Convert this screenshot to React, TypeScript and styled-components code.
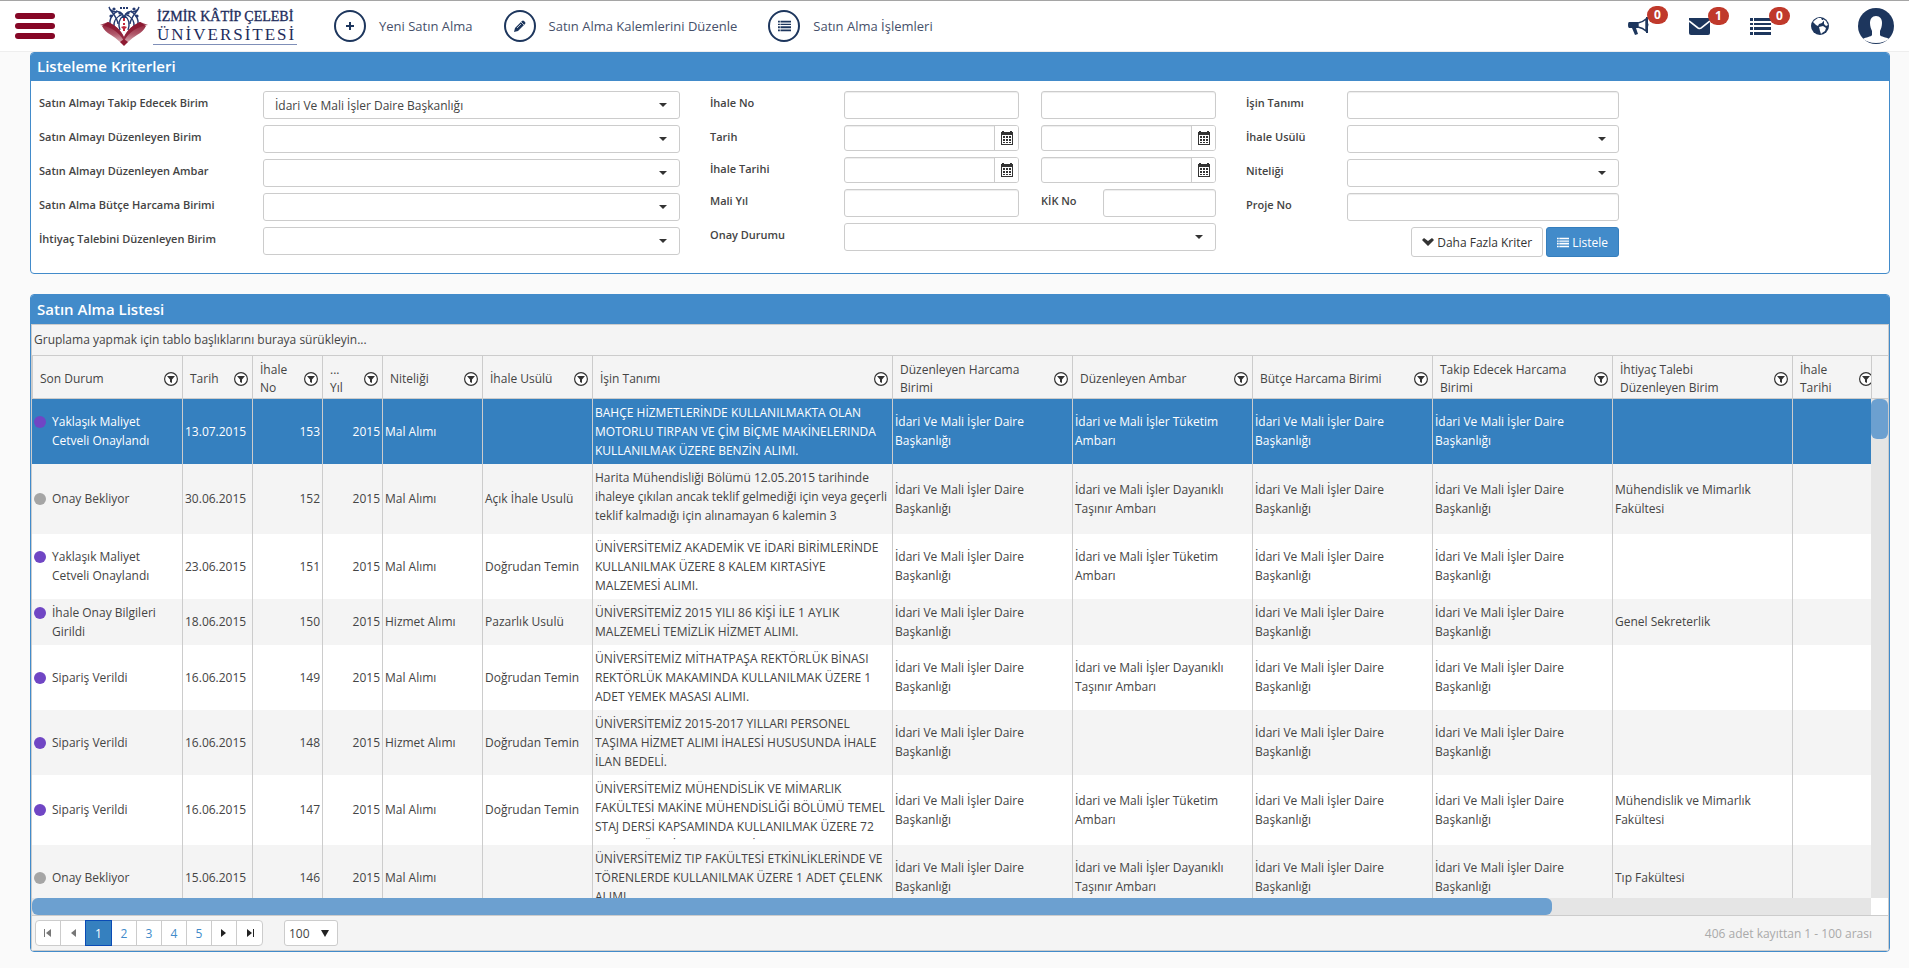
import React from "react";
import styled, { createGlobalStyle, css } from "styled-components";

const GlobalStyle = createGlobalStyle`
  *, *::before, *::after { box-sizing: border-box; }
  body {
    margin: 0;
    background: #fafafa;
    color: #444;
    font-family: "Open Sans", "Noto Sans", sans-serif;
    font-size: 12px;
  }
  button, input, select { font: inherit; color: inherit; margin: 0; }
  svg { display: block; }
`;

const NAVY = "#1d365d";
const BLUE = "#428bca";
const LINE = "#ccc";

/* ---------- top bar ---------- */

const TopBar = styled.header`
  display: flex;
  align-items: center;
  height: 52px;
  padding: 0 15px;
  background: #fff;
  border-top: 1px solid #a5a5a5;
  border-bottom: 1px solid #eee;
`;

const MenuButton = styled.button`
  display: flex;
  flex-direction: column;
  gap: 4px;
  width: 40px;
  padding: 0;
  border: 0;
  background: none;
`;

const MenuBar = styled.span`
  height: 6px;
  border-radius: 3px;
  background: #850626;
`;

const Brand = styled.a`
  display: flex;
  align-items: center;
  gap: 5px;
  width: 197px;
  margin-left: 45px;
  color: #1d2c5c;
  text-decoration: none;
`;

const BrandText = styled.span`
  display: flex;
  flex-direction: column;
  width: 144px;
  padding-left: 4px;
  border-bottom: 1px solid #7f8fb8;
  font-family: "Liberation Serif", serif;
  line-height: 18px;
  white-space: nowrap;
`;

const BrandTop = styled.span`
  font-size: 14px;
  -webkit-text-stroke: 0.3px #1d2c5c;
`;

const BrandBottom = styled.span`
  font-size: 17px;
  letter-spacing: 2px;
`;

const Nav = styled.nav`
  display: flex;
  gap: 31px;
  margin-left: 37px;
`;

const NavLink = styled.a`
  display: flex;
  align-items: center;
  gap: 13px;
  color: #46506a;
  font-size: 13px;
  text-decoration: none;
  white-space: nowrap;
`;

const Ring = styled.span`
  display: grid;
  place-items: center;
  width: 32px;
  height: 32px;
  border: 2px solid ${NAVY};
  border-radius: 50%;
  color: ${NAVY};
`;

const Tools = styled.div`
  display: flex;
  align-items: center;
  margin-left: auto;
  gap: 29px;
`;

const Notices = styled.div`
  display: flex;
  align-items: center;
  gap: 40px;
`;

const ToolButton = styled.button`
  position: relative;
  display: block;
  padding: 0;
  border: 0;
  background: none;
  color: ${NAVY};
`;

const Badge = styled.span`
  position: absolute;
  left: 19px;
  top: -11px;
  width: 21px;
  height: 18px;
  border-radius: 9px;
  background: #c0392b;
  color: #fff;
  font-size: 12px;
  font-weight: 700;
  line-height: 18px;
  text-align: center;
`;

/* ---------- panels ---------- */

const Main = styled.main`
  display: flex;
  flex-direction: column;
  gap: 20px;
  padding: 0 19px 16px 30px;
`;

const Panel = styled.section`
  border: 1px solid ${BLUE};
  border-radius: 4px;
  background: #fff;
  overflow: hidden;
`;

const PanelTitle = styled.h2<{ $tall?: boolean }>`
  height: ${(p) => (p.$tall ? 29 : 28)}px;
  margin: 0;
  padding-left: 6px;
  background: ${BLUE};
  color: #fff;
  font-size: 15px;
  font-weight: 600;
  line-height: ${(p) => (p.$tall ? 28 : 26)}px;
`;

const Criteria = styled.form`
  display: grid;
  grid-template-columns: 641fr 506fr 373fr 240fr;
  column-gap: 30px;
  padding: 10px 0 16px 8px;
`;

const Column = styled.div`
  display: flex;
  flex-direction: column;
  gap: 6px;
  min-width: 0;
`;

const Row = styled.div<{ $cols: string; $gap?: number }>`
  display: grid;
  grid-template-columns: ${(p) => p.$cols};
  column-gap: ${(p) => p.$gap ?? 0}px;
  align-items: start;
`;

const Label = styled.label`
  color: #444;
  font-size: 11px;
  font-weight: 600;
  line-height: 24px;
  white-space: nowrap;
`;

const field = css`
  width: 100%;
  min-width: 0;
  border: 1px solid ${LINE};
  border-radius: 3px;
  background: #fff;
  outline: 0;
`;

const TextBox = styled.input`
  ${field}
  height: 28px;
  padding: 0 11px;
  box-shadow: inset 0 1px 1px rgba(0, 0, 0, 0.075);
`;

const SelectWrap = styled.div`
  display: grid;
  align-items: center;
  & > * { grid-area: 1 / 1; }
  & > svg { justify-self: end; margin-right: 13px; pointer-events: none; }
`;

const SelectBox = styled.select`
  ${field}
  height: 28px;
  padding: 0 11px;
  appearance: none;
  font-size: 12px;
`;

const DateWrap = styled.div`
  ${field}
  display: flex;
  height: 26px;
  overflow: hidden;
`;

const DateInput = styled.input`
  flex: 1;
  min-width: 0;
  border: 0;
  background: none;
  outline: 0;
  box-shadow: inset 0 1px 1px rgba(0, 0, 0, 0.075);
`;

const DateButton = styled.button`
  display: grid;
  place-items: center;
  width: 24px;
  padding: 0;
  border: 0;
  border-left: 1px solid ${LINE};
  background: #fff;
  color: #333;
`;

const Actions = styled.div`
  display: flex;
  justify-content: flex-end;
  gap: 3px;
`;

const ActionButton = styled.button<{ $primary?: boolean }>`
  display: flex;
  align-items: center;
  gap: 3px;
  height: 30px;
  padding: 0 10px;
  border: 1px solid ${(p) => (p.$primary ? "#357ebd" : LINE)};
  border-radius: 3px;
  background: ${(p) => (p.$primary ? BLUE : "#fff")};
  color: ${(p) => (p.$primary ? "#fff" : "#333")};
  font-size: 12px;
  white-space: nowrap;
`;

/* ---------- grid ---------- */

const GridFrame = styled.div`
  border: 1px solid ${LINE};
  background: #f4f4f4;
`;

const GroupHint = styled.div`
  height: 31px;
  padding-left: 2px;
  border-bottom: 1px solid ${LINE};
  line-height: 30px;
  font-size: 12px;
`;

const Viewport = styled.div`
  display: grid;
  grid-template-columns: minmax(0, 1fr) 17px;
  height: calc(100vh - 426px);
  min-height: 240px;
`;

const TableClip = styled.div`
  overflow: hidden;
`;

const Table = styled.table`
  width: 1845px;
  table-layout: fixed;
  border-collapse: separate;
  border-spacing: 0;
  line-height: 19px;
`;

const Th = styled.th`
  height: 43px;
  padding: 4px 4px 0 7px;
  border-left: 1px solid ${LINE};
  border-bottom: 1px solid ${LINE};
  font-weight: 400;
  line-height: 18px;
  text-align: left;
`;

const ThInner = styled.div`
  display: flex;
  align-items: center;
  justify-content: space-between;
  gap: 14px;
`;

const FilterButton = styled.button`
  flex: none;
  padding: 0;
  border: 0;
  background: none;
  color: #333;
`;

const Tr = styled.tr<{ $selected?: boolean }>`
  background: #fff;
  &:nth-child(even) { background: #f4f4f4; }
  ${(p) => p.$selected && css`
    background: #3580bf;
    color: #fff;
  `}
`;

const Td = styled.td<{ $right?: boolean; $full?: boolean }>`
  padding: ${(p) => (p.$full ? "4px 2px" : "3px 2px 4px")};
  border-left: 1px solid ${LINE};
  text-align: ${(p) => (p.$right ? "right" : "left")};
  vertical-align: middle;
  &:first-child { border-left: 0; }
`;

const Status = styled.div`
  display: grid;
  grid-template-columns: 12px 1fr;
  column-gap: 6px;
  padding-right: 8px;
`;

const Dot = styled.span<{ $color: string }>`
  width: 12px;
  height: 12px;
  margin-top: 4px;
  border-radius: 50%;
  background: ${(p) => p.$color};
`;

const Description = styled.div`
  max-height: 62px;
  overflow: hidden;
  white-space: pre;
`;

const Rail = styled.div`
  display: grid;
  grid-template-rows: 43px minmax(0, 1fr);
`;

const RailHead = styled.div`
  border-left: 1px solid ${LINE};
  border-bottom: 1px solid ${LINE};
`;

const Track = styled.div`
  background: #e5e5e5;
`;

const VThumb = styled.div`
  height: 40px;
  border-radius: 6px;
  background: #6ca0d0;
`;

const HScroll = styled.div`
  display: grid;
  grid-template-columns: minmax(0, 1fr) 17px;
  height: 17px;
  background: #fff;
`;

const HThumb = styled.div`
  width: 82.65%;
  height: 17px;
  border-radius: 6px;
  background: #6ca0d0;
`;

const Pager = styled.div`
  display: flex;
  align-items: center;
  height: 35px;
  padding: 0 16px 0 3px;
  border-top: 1px solid ${LINE};
`;

const PageList = styled.div`
  display: flex;
  border: 1px solid ${LINE};
  border-radius: 4px;
  background: #fff;
`;

const PageButton = styled.button<{ $current?: boolean; $muted?: boolean }>`
  display: grid;
  place-items: center;
  width: 25px;
  height: 24px;
  padding: 0;
  border: 0;
  border-right: 1px solid ${LINE};
  background: none;
  color: ${(p) => (p.$muted ? "#777" : "#222")};
  font-size: 12px;
  &:last-child { border-right: 0; }
  ${(p) => p.$current && css`
    width: 27px;
    height: 26px;
    margin: -1px 0 -1px -1px;
    border: 1px solid #0a4bb5;
    background: #3580bf;
  `}
`;

const PageNumber = styled.span<{ $current?: boolean }>`
  color: ${(p) => (p.$current ? "#fff" : BLUE)};
`;

const SizeWrap = styled(SelectWrap)`
  width: 54px;
  margin-left: 21px;
  & > svg { margin-right: 9px; }
`;

const SizeSelect = styled(SelectBox)`
  height: 26px;
  padding: 0 4px;
`;

const PagerInfo = styled.span`
  margin-left: auto;
  color: #aaa;
  font-size: 12px;
`;

/* ---------- drawings ---------- */

const Emblem = () => (
  <svg width="48" height="40" viewBox="0 0 48 40" fill="none" aria-hidden="true">
    <defs>
      <linearGradient id="page" x1="0" y1="16" x2="0" y2="40" gradientUnits="userSpaceOnUse">
        <stop offset="0" stopColor="#8a1730" />
        <stop offset="0.5" stopColor="#b0586a" />
        <stop offset="1" stopColor="#ecd3d6" />
      </linearGradient>
    </defs>
    <g stroke="#243a70" strokeWidth="1.400">
      <path d="M9 1c1 4 4 5 8 5M9 1c1 5 8 8 9 17M39 1c-1 4-4 5-8 5M39 1c-1 5-8 8-9 17" />
      <path d="M16 5c5 1 8 4 8 8M32 5c-5 1-8 4-8 8M10 19c-1-6 2-10 6-13M38 19c1-6-2-10-6-13M14 22c-1-7 3-12 9-14M34 22c1-7-3-12-9-14M20 24c-2-6-1-11 3-14M28 24c2-6 1-11-3-14" />
    </g>
    <g fill="#243a70">
      <circle cx="14" cy="3" r="1.600" /><circle cx="34" cy="3" r="1.600" />
      <circle cx="20" cy="7" r="1.600" /><circle cx="28" cy="7" r="1.600" />
      <circle cx="11" cy="10" r="1.600" /><circle cx="37" cy="10" r="1.600" />
      <path d="M20 1h2v2h-2zM23 1h2v2h-2zM26 1h2v2h-2z" />
    </g>
    <path d="M2 20l6-4c7 3 13 8 16 15 3-7 9-12 16-15l6 4q-3 6-9 9-5 3-9 7l-4 3-4-3q-4-4-9-7-6-3-9-9z" fill="url(#page)" />
    <path d="M0 19l8-3c7 3 13 8 16 15 3-7 9-12 16-15l8 3c-10 1-19 7-24 16C19 26 10 20 0 19z" fill="#8a1730" opacity="0.8" />
    <path d="M20 36l4 4 4-4-4-3z" fill="#8e1b32" />
    <path d="M23 12h2v3h-2zM23 17h2v2h-2zM21 21l3-1 3 1-2 2v2h-2v-2z" fill="#c0283c" />
  </svg>
);

const ListGlyph = ({ w, h }: { w: number; h: number }) => (
  <svg width={w} height={h} viewBox="0 0 21 17" fill="currentColor" aria-hidden="true">
    <path d="M0 0h3v3H0zM4 0h17v3H4zM0 5h3v2H0zM4 5h17v2H4zM0 9h3v3H0zM4 9h17v3H4zM0 14h3v3H0zM4 14h17v3H4z" />
  </svg>
);

const PlusGlyph = () => (
  <svg width="8" height="8" viewBox="0 0 8 8" fill="currentColor" aria-hidden="true">
    <path d="M3 0h2v3h3v2H5v3H3V5H0V3h3z" />
  </svg>
);

const PencilGlyph = () => (
  <svg width="12" height="12" viewBox="0 0 12 12" aria-hidden="true">
    <path d="M0 12l1-4 7-7q1-1 2 0l1 1q1 1 0 2l-7 7z" fill="currentColor" />
    <path d="M7 2l3 3M3 8l4-4" stroke="#fff" strokeWidth="0.700" />
  </svg>
);

const HornGlyph = () => (
  <svg width="21" height="18" viewBox="0 0 21 18" aria-hidden="true">
    <path d="M1 5h9v6H8l2 6-3 1-3-7H1q-1 0-1-3t1-3z" fill="currentColor" />
    <path d="M10 6q5-1 8-4v12q-3-3-8-4z" fill="#fff" stroke="currentColor" strokeWidth="1.4" />
    <path d="M18 0h2v6q1 1 0 4v6h-2z" fill="currentColor" />
  </svg>
);

const MailGlyph = () => (
  <svg width="21" height="17" viewBox="0 0 21 17" aria-hidden="true">
    <path d="M0 0h21v15q0 2-2 2H2q-2 0-2-2z" fill="currentColor" />
    <path d="M0 3l9 7q2 1 3 0l9-7" fill="none" stroke="#fff" strokeWidth="1.6" />
  </svg>
);

const GlobeGlyph = () => (
  <svg width="18" height="18" viewBox="0 0 18 18" aria-hidden="true">
    <circle cx="9" cy="9" r="9" fill="currentColor" />
    <path d="M4 3l3-2 3 0 1 2 2 0-2 3-3 1-1 2-2-1-2-2-1-1zM12 2l3 2 2 4-2 1-2-2 0-2zM8 10l4-1 3 2-1 3-3 2-1 1-1-3z" fill="#fff" />
  </svg>
);

const Avatar = () => (
  <svg width="36" height="36" viewBox="0 0 36 36" aria-hidden="true">
    <circle cx="18" cy="18" r="18" fill={NAVY} />
    <path d="M18 8c4 0 6 3 6 7 0 3-1 6-2 8v4c1 2 6 2 9 4-3 2-7 4-13 4s-10-2-13-4c3-2 8-2 9-4v-4c-1-2-2-5-2-8 0-4 2-7 6-7z" fill="#fff" />
  </svg>
);

const Caret = () => (
  <svg width="8" height="4" viewBox="0 0 8 4" aria-hidden="true">
    <path d="M0 0h8L4 4z" fill="#333" />
  </svg>
);

const SizeCaret = () => (
  <svg width="8" height="7" viewBox="0 0 8 7" aria-hidden="true">
    <path d="M0 0h8L4 7z" fill="#222" />
  </svg>
);

const CalendarGlyph = () => (
  <svg width="12" height="14" viewBox="0 0 12 14" fill="currentColor" aria-hidden="true">
    <path fillRule="evenodd" d="M0 1h1V0h2v1h6V0h2v1h1v13H0zM1 4v9h10V4z" />
    <path d="M2 5h2v2H2zM5 5h2v2H5zM8 5h2v2H8zM2 8h2v2H2zM5 8h2v2H5zM8 8h2v2H8zM2 11h2v1H2zM5 11h2v1H5zM8 11h2v1H8z" />
  </svg>
);

const ChevronGlyph = () => (
  <svg width="12" height="8" viewBox="0 0 12 8" aria-hidden="true">
    <path d="M0 2l2-2 4 3 4-3 2 2-6 6z" fill="currentColor" />
  </svg>
);

const FilterGlyph = () => (
  <svg width="14" height="14" viewBox="0 0 14 14" aria-hidden="true">
    <circle cx="7" cy="7" r="6.400" fill="#fff" stroke="currentColor" strokeWidth="1.200" />
    <path d="M3 4h8L8 7.500V11L6 10V7.500z" fill="currentColor" />
  </svg>
);

const Arrow = ({ back, end }: { back?: boolean; end?: boolean }) => (
  <svg width="8" height="8" viewBox="0 0 8 8" fill="currentColor" aria-hidden="true">
    {back ? <path d="M7 0v8L2 4z" /> : <path d="M1 0v8l5-4z" />}
    {end && (back ? <path d="M0 0h1v8H0z" /> : <path d="M7 0h1v8H7z" />)}
  </svg>
);

/* ---------- data ---------- */

const unit = "İdari Ve Mali İşler Daire Başkanlığı";
const storeA = "İdari ve Mali İşler Tüketim Ambarı";
const storeB = "İdari ve Mali İşler Dayanıklı Taşınır Ambarı";
const PURPLE = "#7046c4";
const GREY = "#a5a5a5";

const columns: [string, number][] = [
  ["Son Durum", 150],
  ["Tarih", 70],
  ["İhale No", 70],
  ["... Yıl", 60],
  ["Niteliği", 100],
  ["İhale Usülü", 110],
  ["İşin Tanımı", 300],
  ["Düzenleyen Harcama Birimi", 180],
  ["Düzenleyen Ambar", 180],
  ["Bütçe Harcama Birimi", 180],
  ["Takip Edecek Harcama Birimi", 180],
  ["İhtiyaç Talebi Düzenleyen Birim", 180],
  ["İhale Tarihi", 85],
];

type Item = {
  status: string;
  color: string;
  date: string;
  no: number;
  kind: string;
  method?: string;
  text: string;
  store?: string;
  requester?: string;
};

const items: Item[] = [
  { status: "Yaklaşık Maliyet Cetveli Onaylandı", color: PURPLE, date: "13.07.2015", no: 153, kind: "Mal Alımı", text: "BAHÇE HİZMETLERİNDE KULLANILMAKTA OLAN\nMOTORLU TIRPAN VE ÇİM BİÇME MAKİNELERINDA\nKULLANILMAK ÜZERE BENZİN ALIMI.", store: storeA },
  { status: "Onay Bekliyor", color: GREY, date: "30.06.2015", no: 152, kind: "Mal Alımı", method: "Açık İhale Usulü", text: "Harita Mühendisliği Bölümü 12.05.2015 tarihinde\nihaleye çıkılan ancak teklif gelmediği için veya geçerli\nteklif kalmadığı için alınamayan 6 kalemin 3\n ", store: storeB, requester: "Mühendislik ve Mimarlık Fakültesi" },
  { status: "Yaklaşık Maliyet Cetveli Onaylandı", color: PURPLE, date: "23.06.2015", no: 151, kind: "Mal Alımı", method: "Doğrudan Temin", text: "ÜNİVERSİTEMİZ AKADEMİK VE İDARİ BİRİMLERİNDE\nKULLANILMAK ÜZERE 8 KALEM KIRTASİYE\nMALZEMESİ ALIMI.", store: storeA },
  { status: "İhale Onay Bilgileri Girildi", color: PURPLE, date: "18.06.2015", no: 150, kind: "Hizmet Alımı", method: "Pazarlık Usulü", text: "ÜNİVERSİTEMİZ 2015 YILI 86 KİŞİ İLE 1 AYLIK\nMALZEMELİ TEMİZLİK HİZMET ALIMI.", requester: "Genel Sekreterlik" },
  { status: "Sipariş Verildi", color: PURPLE, date: "16.06.2015", no: 149, kind: "Mal Alımı", method: "Doğrudan Temin", text: "ÜNİVERSİTEMİZ MİTHATPAŞA REKTÖRLÜK BİNASI\nREKTÖRLÜK MAKAMINDA KULLANILMAK ÜZERE 1\nADET YEMEK MASASI ALIMI.", store: storeB },
  { status: "Sipariş Verildi", color: PURPLE, date: "16.06.2015", no: 148, kind: "Hizmet Alımı", method: "Doğrudan Temin", text: "ÜNİVERSİTEMİZ 2015-2017 YILLARI PERSONEL\nTAŞIMA HİZMET ALIMI İHALESİ HUSUSUNDA İHALE\nİLAN BEDELİ." },
  { status: "Sipariş Verildi", color: PURPLE, date: "16.06.2015", no: 147, kind: "Mal Alımı", method: "Doğrudan Temin", text: "ÜNİVERSİTEMİZ MÜHENDİSLİK VE MİMARLIK\nFAKÜLTESİ MAKİNE MÜHENDİSLİĞİ BÖLÜMÜ TEMEL\nSTAJ DERSİ KAPSAMINDA KULLANILMAK ÜZERE 72\nKALEM TÜKETİM MALZEMESİ ALIMI.", store: storeA, requester: "Mühendislik ve Mimarlık Fakültesi" },
  { status: "Onay Bekliyor", color: GREY, date: "15.06.2015", no: 146, kind: "Mal Alımı", text: "ÜNİVERSİTEMİZ TIP FAKÜLTESİ ETKİNLİKLERİNDE VE\nTÖRENLERDE KULLANILMAK ÜZERE 1 ADET ÇELENK\nALIMI.", store: storeB, requester: "Tıp Fakültesi" },
];

/* ---------- composed controls ---------- */

const Select = ({ id, value = "" }: { id: string; value?: string }) => (
  <SelectWrap>
    <SelectBox id={id} defaultValue={value}>
      <option value={value}>{value}</option>
    </SelectBox>
    <Caret />
  </SelectWrap>
);

const DateBox = ({ id, name }: { id: string; name: string }) => (
  <DateWrap>
    <DateInput id={id} type="text" aria-label={name} />
    <DateButton type="button" aria-label={name + " seç"}>
      <CalendarGlyph />
    </DateButton>
  </DateWrap>
);

const LEFT = "224px minmax(0, 1fr)";
const RIGHT = "101px minmax(0, 1fr)";
const PAIR = "112px minmax(0, 1fr) minmax(0, 1fr)";

const leftFields = [
  ["takip", "Satın Almayı Takip Edecek Birim", unit],
  ["birim", "Satın Almayı Düzenleyen Birim", ""],
  ["ambar", "Satın Almayı Düzenleyen Ambar", ""],
  ["butce", "Satın Alma Bütçe Harcama Birimi", ""],
  ["ihtiyac", "İhtiyaç Talebini Düzenleyen Birim", ""],
];

export default function App() {
  return (
    <>
      <GlobalStyle />
      <TopBar>
        <MenuButton type="button" aria-label="Menü">
          <MenuBar />
          <MenuBar />
          <MenuBar />
        </MenuButton>
        <Brand href="#">
          <Emblem />
          <BrandText>
            <BrandTop>İZMİR KÂTİP ÇELEBİ</BrandTop>
            <BrandBottom>ÜNİVERSİTESİ</BrandBottom>
          </BrandText>
        </Brand>
        <Nav>
          <NavLink href="#"><Ring><PlusGlyph /></Ring>Yeni Satın Alma</NavLink>
          <NavLink href="#"><Ring><PencilGlyph /></Ring>Satın Alma Kalemlerini Düzenle</NavLink>
          <NavLink href="#"><Ring><ListGlyph w={13} h={12} /></Ring>Satın Alma İşlemleri</NavLink>
        </Nav>
        <Tools>
          <Notices>
            <ToolButton type="button" aria-label="Duyurular"><HornGlyph /><Badge>0</Badge></ToolButton>
            <ToolButton type="button" aria-label="Mesajlar"><MailGlyph /><Badge>1</Badge></ToolButton>
            <ToolButton type="button" aria-label="Görevler"><ListGlyph w={21} h={17} /><Badge>0</Badge></ToolButton>
            <ToolButton type="button" aria-label="Dil"><GlobeGlyph /></ToolButton>
          </Notices>
          <ToolButton type="button" aria-label="Profil"><Avatar /></ToolButton>
        </Tools>
      </TopBar>

      <Main>
        <Panel>
          <PanelTitle>Listeleme Kriterleri</PanelTitle>
          <Criteria>
            <Column>
              {leftFields.map(([id, label, value]) => (
                <Row key={id} $cols={LEFT}>
                  <Label htmlFor={id}>{label}</Label>
                  <Select id={id} value={value} />
                </Row>
              ))}
            </Column>
            <Column>
              <Row $cols={PAIR} $gap={22}>
                <Label htmlFor="ihale-no">İhale No</Label>
                <TextBox id="ihale-no" />
                <TextBox aria-label="İhale No bitiş" />
              </Row>
              <Row $cols={PAIR} $gap={22}>
                <Label htmlFor="tarih">Tarih</Label>
                <DateBox id="tarih" name="Tarih" />
                <DateBox id="tarih-2" name="Tarih bitiş" />
              </Row>
              <Row $cols={PAIR} $gap={22}>
                <Label htmlFor="ihale-tarihi">İhale Tarihi</Label>
                <DateBox id="ihale-tarihi" name="İhale Tarihi" />
                <DateBox id="ihale-tarihi-2" name="İhale Tarihi bitiş" />
              </Row>
              <Row $cols={PAIR} $gap={22}>
                <Label htmlFor="mali-yil">Mali Yıl</Label>
                <TextBox id="mali-yil" />
                <Row $cols="62px minmax(0, 1fr)">
                  <Label htmlFor="kik-no">KİK No</Label>
                  <TextBox id="kik-no" />
                </Row>
              </Row>
              <Row $cols="134px minmax(0, 1fr)">
                <Label htmlFor="onay">Onay Durumu</Label>
                <Select id="onay" />
              </Row>
            </Column>
            <Column>
              <Row $cols={RIGHT}>
                <Label htmlFor="tanim">İşin Tanımı</Label>
                <TextBox id="tanim" />
              </Row>
              <Row $cols={RIGHT}>
                <Label htmlFor="usul">İhale Usülü</Label>
                <Select id="usul" />
              </Row>
              <Row $cols={RIGHT}>
                <Label htmlFor="nitelik">Niteliği</Label>
                <Select id="nitelik" />
              </Row>
              <Row $cols={RIGHT}>
                <Label htmlFor="proje">Proje No</Label>
                <TextBox id="proje" />
              </Row>
              <Actions>
                <ActionButton type="button"><ChevronGlyph />Daha Fazla Kriter</ActionButton>
                <ActionButton type="button" $primary><ListGlyph w={12} h={11} />Listele</ActionButton>
              </Actions>
            </Column>
          </Criteria>
        </Panel>

        <Panel>
          <PanelTitle $tall>Satın Alma Listesi</PanelTitle>
          <GridFrame>
            <GroupHint>Gruplama yapmak için tablo başlıklarını buraya sürükleyin...</GroupHint>
            <Viewport>
              <TableClip>
                <Table>
                  <colgroup>
                    {columns.map(([name, w]) => <col key={name} style={{ width: w }} />)}
                  </colgroup>
                  <thead>
                    <tr>
                      {columns.map(([name]) => (
                        <Th key={name} scope="col">
                          <ThInner>
                            {name}
                            <FilterButton type="button" aria-label={name + " filtrele"}><FilterGlyph /></FilterButton>
                          </ThInner>
                        </Th>
                      ))}
                    </tr>
                  </thead>
                  <tbody>
                    {items.map((it, i) => (
                      <Tr key={it.no} $selected={i === 0}>
                        <Td><Status><Dot $color={it.color} />{it.status}</Status></Td>
                        <Td>{it.date}</Td>
                        <Td $right>{it.no}</Td>
                        <Td $right>2015</Td>
                        <Td>{it.kind}</Td>
                        <Td>{it.method}</Td>
                        <Td $full><Description>{it.text}</Description></Td>
                        <Td>{unit}</Td>
                        <Td>{it.store}</Td>
                        <Td>{unit}</Td>
                        <Td>{unit}</Td>
                        <Td>{it.requester}</Td>
                        <Td />
                      </Tr>
                    ))}
                  </tbody>
                </Table>
              </TableClip>
              <Rail>
                <RailHead />
                <Track><VThumb /></Track>
              </Rail>
            </Viewport>
            <HScroll>
              <Track><HThumb /></Track>
            </HScroll>
            <Pager>
              <PageList>
                <PageButton type="button" $muted aria-label="İlk sayfa"><Arrow back end /></PageButton>
                <PageButton type="button" $muted aria-label="Önceki sayfa"><Arrow back /></PageButton>
                {[1, 2, 3, 4, 5].map((n) => (
                  <PageButton key={n} type="button" $current={n === 1}>
                    <PageNumber $current={n === 1}>{n}</PageNumber>
                  </PageButton>
                ))}
                <PageButton type="button" aria-label="Sonraki sayfa"><Arrow /></PageButton>
                <PageButton type="button" aria-label="Son sayfa"><Arrow end /></PageButton>
              </PageList>
              <SizeWrap>
                <SizeSelect aria-label="Sayfa boyutu" defaultValue="100">
                  <option value="100">100</option>
                </SizeSelect>
                <SizeCaret />
              </SizeWrap>
              <PagerInfo>406 adet kayıttan 1 - 100 arası</PagerInfo>
            </Pager>
          </GridFrame>
        </Panel>
      </Main>
    </>
  );
}
